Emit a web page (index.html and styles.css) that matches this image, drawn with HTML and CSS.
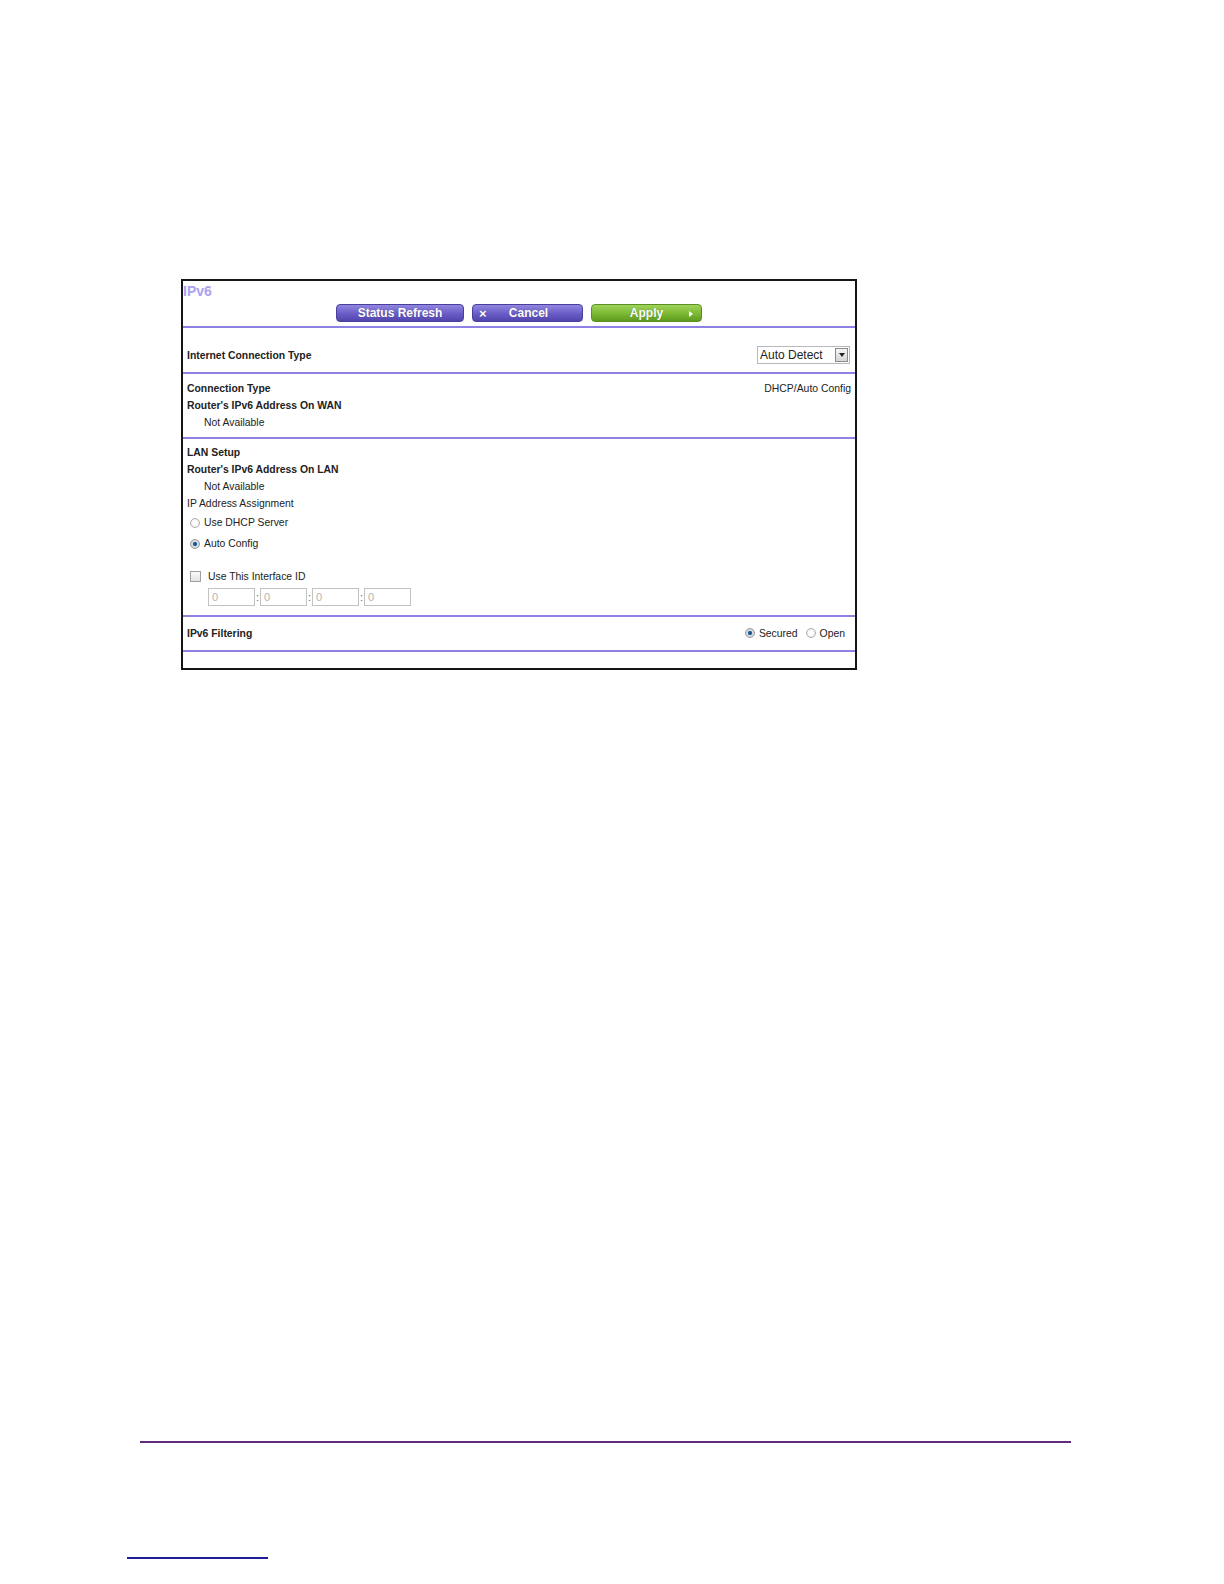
FILE: index.html
```html
<!DOCTYPE html>
<html>
<head>
<meta charset="utf-8">
<title>IPv6</title>
<link rel="stylesheet" href="styles.css">
</head>
<body>
<div class="page">
  <div class="shot">
    <div class="head">
      <div class="title">IPv6</div>
      <div class="buttons">
        <span class="btn btn-purple btn-refresh">Status Refresh</span>
        <span class="btn btn-purple btn-cancel"><span class="btn-x">&#215;</span><span class="btn-label">Cancel</span></span>
        <span class="btn btn-green btn-apply"><span class="btn-label">Apply</span><span class="btn-tri"></span></span>
      </div>
    </div>
    <div class="rule"></div>
    <div class="sec sec-ict">
      <div class="row">
        <span class="b">Internet Connection Type</span>
        <span class="select"><span class="select-text">Auto Detect</span><span class="select-btn"><span class="select-tri"></span></span></span>
      </div>
    </div>
    <div class="rule"></div>
    <div class="sec sec-wan">
      <div class="line row"><span class="b">Connection Type</span><span>DHCP/Auto Config</span></div>
      <div class="line b">Router's IPv6 Address On WAN</div>
      <div class="line indent">Not Available</div>
    </div>
    <div class="rule"></div>
    <div class="sec sec-lan">
      <div class="line b">LAN Setup</div>
      <div class="line b">Router's IPv6 Address On LAN</div>
      <div class="line indent">Not Available</div>
      <div class="line">IP Address Assignment</div>
      <div class="opt"><span class="radio"></span>Use DHCP Server</div>
      <div class="opt"><span class="radio on"></span>Auto Config</div>
      <div class="opt opt-check"><span class="check"></span>Use This Interface ID</div>
      <div class="ids">
        <span class="idbox">0</span><span class="colon">:</span>
        <span class="idbox">0</span><span class="colon">:</span>
        <span class="idbox">0</span><span class="colon">:</span>
        <span class="idbox">0</span>
      </div>
    </div>
    <div class="rule"></div>
    <div class="sec sec-filter">
      <div class="row">
        <span class="b">IPv6 Filtering</span>
        <span class="filt"><span class="radio on"></span>Secured<span class="radio gap"></span>Open</span>
      </div>
    </div>
    <div class="rule"></div>
    <div class="tail"></div>
  </div>
  <div class="footer-rule"></div>
  <div class="link-line"></div>
</div>
</body>
</html>
```

FILE: styles.css
```css
html, body {
  margin: 0;
  padding: 0;
  background: #ffffff;
}
body {
  font-family: "Liberation Sans", Arial, sans-serif;
  color: #222222;
}
.page {
  width: 1224px;
  height: 1584px;
  padding-top: 279px;
  box-sizing: border-box;
  overflow: hidden;
}
.shot {
  margin-left: 181px;
  width: 672px;
  border: 2px solid #151515;
  background: #ffffff;
  font-size: 10.4px;
}
.head {
  height: 45px;
}
.title {
  height: 20px;
  line-height: 21px;
  font-size: 14px;
  font-weight: bold;
  color: #aca2f2;
  padding-left: 0;
}
.buttons {
  margin-top: 3px;
  display: flex;
  padding-left: 153px;
  gap: 8px;
}
.btn {
  height: 18px;
  box-sizing: border-box;
  border-radius: 4px;
  color: #ffffff;
  font-weight: bold;
  font-size: 12px;
  line-height: 17px;
  display: flex;
  align-items: center;
  text-shadow: 0 0 1px rgba(0,0,0,0.35);
}
.btn-purple {
  background: linear-gradient(#9186e0, #6a5cc6 55%, #5244ad);
  border: 1px solid #4a3e9c;
}
.btn-green {
  background: linear-gradient(#9fd45a, #7bb832 55%, #5f9a1f);
  border: 1px solid #5a8f22;
}
.btn-refresh {
  width: 128px;
  justify-content: center;
}
.btn-cancel {
  width: 111px;
  position: relative;
}
.btn-x {
  position: absolute;
  left: 6px;
  top: 0;
  font-size: 13px;
}
.btn-cancel .btn-label {
  width: 100%;
  text-align: center;
  padding-left: 2px;
}
.btn-apply {
  width: 111px;
  position: relative;
}
.btn-apply .btn-label {
  width: 100%;
  text-align: center;
}
.btn-tri {
  position: absolute;
  right: 8px;
  top: 6px;
  width: 0;
  height: 0;
  border-left: 4px solid #ffffff;
  border-top: 3px solid transparent;
  border-bottom: 3px solid transparent;
}
.rule {
  height: 2px;
  background: #8d82e4;
}
.sec {
  padding-left: 4px;
  padding-right: 4px;
}
.row {
  display: flex;
  justify-content: space-between;
  align-items: center;
}
.b {
  font-weight: bold;
}
.sec-ict {
  padding-top: 18px;
  padding-bottom: 8px;
}
.sec-ict .row {
  height: 18px;
  padding-right: 1px;
}
.select {
  width: 93px;
  height: 18px;
  box-sizing: border-box;
  border: 1px solid #b8b8b8;
  display: flex;
  align-items: center;
  justify-content: space-between;
  font-size: 12px;
  font-weight: normal;
  color: #222;
  padding-left: 2px;
  background: #fff;
}
.select-btn {
  width: 13px;
  height: 14px;
  margin-right: 1px;
  box-sizing: border-box;
  border: 1px solid #8a8a8a;
  background: linear-gradient(#f4f4f4, #d6d6d6);
  display: flex;
  align-items: center;
  justify-content: center;
}
.select-tri {
  width: 0;
  height: 0;
  border-top: 4px solid #222;
  border-left: 3px solid transparent;
  border-right: 3px solid transparent;
}
.line {
  height: 17px;
  line-height: 17px;
}
.indent {
  padding-left: 17px;
}
.sec-wan {
  padding-top: 6px;
  padding-bottom: 6px;
}
.sec-lan {
  padding-top: 5px;
  padding-bottom: 9px;
}
.opt {
  height: 21px;
  display: flex;
  align-items: center;
  padding-left: 3px;
}
.opt-check {
  margin-top: 12px;
  height: 20px;
}
.radio {
  width: 10px;
  height: 10px;
  box-sizing: border-box;
  border-radius: 50%;
  border: 1px solid #b0b0b0;
  background: radial-gradient(circle, #ffffff 35%, #dcdcdc);
  margin-right: 4px;
  display: inline-block;
  flex: none;
}
.radio.on {
  background: radial-gradient(circle, #173f6e 0, #2a6aa8 32%, #d6dde4 45%, #cfcfcf);
  border-color: #9a9a9a;
}
.check {
  width: 11px;
  height: 11px;
  box-sizing: border-box;
  border: 1px solid #a0a0a0;
  background: linear-gradient(#fafafa, #e2e2e2);
  margin-right: 7px;
  display: inline-block;
}
.ids {
  margin-top: 2px;
  padding-left: 21px;
  display: flex;
  align-items: center;
  height: 18px;
}
.idbox {
  width: 47px;
  height: 18px;
  box-sizing: border-box;
  border: 1px solid #c2c2c2;
  color: #b4b4b4;
  font-size: 11px;
  line-height: 16px;
  padding-left: 3px;
}
.colon {
  width: 5px;
  text-align: center;
  color: #666;
  font-size: 11px;
}
.sec-filter {
  padding-top: 7px;
  padding-bottom: 8px;
}
.sec-filter .row {
  height: 18px;
  padding-right: 6px;
}
.filt {
  display: flex;
  align-items: center;
}
.radio.gap {
  margin-left: 8px;
}
.tail {
  height: 16px;
}
.footer-rule {
  margin-top: 771px;
  margin-left: 140px;
  width: 931px;
  height: 2px;
  background: #5e2d7e;
}
.link-line {
  margin-top: 114px;
  margin-left: 127px;
  width: 141px;
  height: 2px;
  background: #1d1d9c;
}
```
